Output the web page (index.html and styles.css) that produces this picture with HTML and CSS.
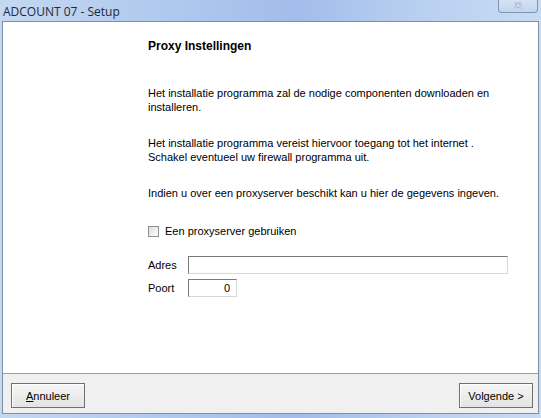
FILE: index.html
```html
<!DOCTYPE html>
<html lang="nl">
<head>
    <meta charset="UTF-8">
    <title>ADCOUNT 07 - Setup</title>
    <link rel="stylesheet" href="styles.css">
</head>
<body>
    <div class="window">
        <div class="titlebar">
            <span class="title">ADCOUNT 07 - Setup</span>
            <span class="close">&#10005;</span>
        </div>

        <div class="client">
            <div class="page">
                <h1>Proxy Instellingen</h1>
                <p>Het installatie programma zal de nodige componenten downloaden en installeren.</p>
                <p>Het installatie programma vereist hiervoor toegang tot het internet .<br>Schakel eventueel uw firewall programma uit.</p>
                <p>Indien u over een proxyserver beschikt kan u hier de gegevens ingeven.</p>

                <label class="check"><span class="box"></span>Een proxyserver gebruiken</label>

                <div class="field">
                    <span class="lbl">Adres</span>
                    <span class="edit wide"></span>
                </div>
                <div class="field">
                    <span class="lbl">Poort</span>
                    <span class="edit port">0</span>
                </div>
            </div>

            <div class="buttons">
                <button><u>A</u>nnuleer</button>
                <button>Volgende &gt;</button>
            </div>
        </div>
    </div>
</body>
</html>
```

FILE: styles.css
```css
body {
    margin: 0;
    font-family: 'Liberation Sans', Arial, sans-serif;
    font-size: 11px;
    color: #000;
}

.window {
    width: 541px;
    height: 418px;
    box-sizing: border-box;
    background: linear-gradient(to right, #c4d8f2 0%, #b0c9ee 30%, #a2bdea 55%, #bad0f0 78%, #c8dbf3 100%);
    padding: 0 2px 4px 2px;
    display: flex;
    flex-direction: column;
}

.titlebar {
    height: 21px;
    display: flex;
    align-items: flex-start;
    justify-content: space-between;
}

.title {
    font-family: 'Open Sans', 'Noto Sans', sans-serif;
    font-size: 12px;
    color: #1e2a3a;
    margin: 3px 0 0 1px;
}

.close {
    width: 40px;
    height: 13px;
    margin-right: 1px;
    box-sizing: border-box;
    border: 1px solid #7f95b4;
    border-top: none;
    border-radius: 0 0 4px 4px;
    background: linear-gradient(#d5e2f4, #c3d5ef);
    color: #f4f7fb;
    font-size: 10px;
    line-height: 11px;
    text-align: center;
    text-shadow: 0 0 1px #4d5f79, 0 0 1px #4d5f79;
}

.client {
    flex: 1;
    border: 1px solid #7f8fa3;
    background: #f0f0f0;
    display: flex;
    flex-direction: column;
}

.page {
    flex: 1;
    background: #fff;
    border-bottom: 1px solid #a0a0a0;
    padding: 17px 0 0 145px;
    line-height: 14px;
}

h1 {
    margin: 0 0 33px 0;
    font-size: 12px;
    font-weight: bold;
}

p {
    margin: 0 0 22px 0;
    width: 360px;
}

.check {
    display: flex;
    align-items: center;
    gap: 6px;
    margin: 24px 0 18px 0;
}

.box {
    width: 11px;
    height: 11px;
    box-sizing: border-box;
    border: 1px solid #8e8f8f;
    background: linear-gradient(135deg, #dcdcdc, #fff);
}

.field {
    display: flex;
    align-items: center;
    margin-bottom: 5px;
}

.lbl {
    width: 40px;
}

.edit {
    height: 18px;
    box-sizing: border-box;
    border: 1px solid #d8d8d8;
    border-top-color: #7a7a7a;
    border-left-color: #7a7a7a;
    background: #fff;
}

.wide {
    width: 320px;
}

.port {
    width: 49px;
    text-align: right;
    padding-right: 6px;
    line-height: 16px;
}

.buttons {
    height: 39px;
    box-sizing: border-box;
    display: flex;
    align-items: flex-start;
    justify-content: space-between;
    padding: 9px 5px 0 8px;
}

button {
    width: 74px;
    height: 25px;
    font-family: inherit;
    font-size: 11px;
    background: linear-gradient(#f6f6f6, #e3e3e3);
    border: 1px solid #707070;
    box-shadow: inset 1px 1px 0 #fff;
    padding: 0;
}
```
